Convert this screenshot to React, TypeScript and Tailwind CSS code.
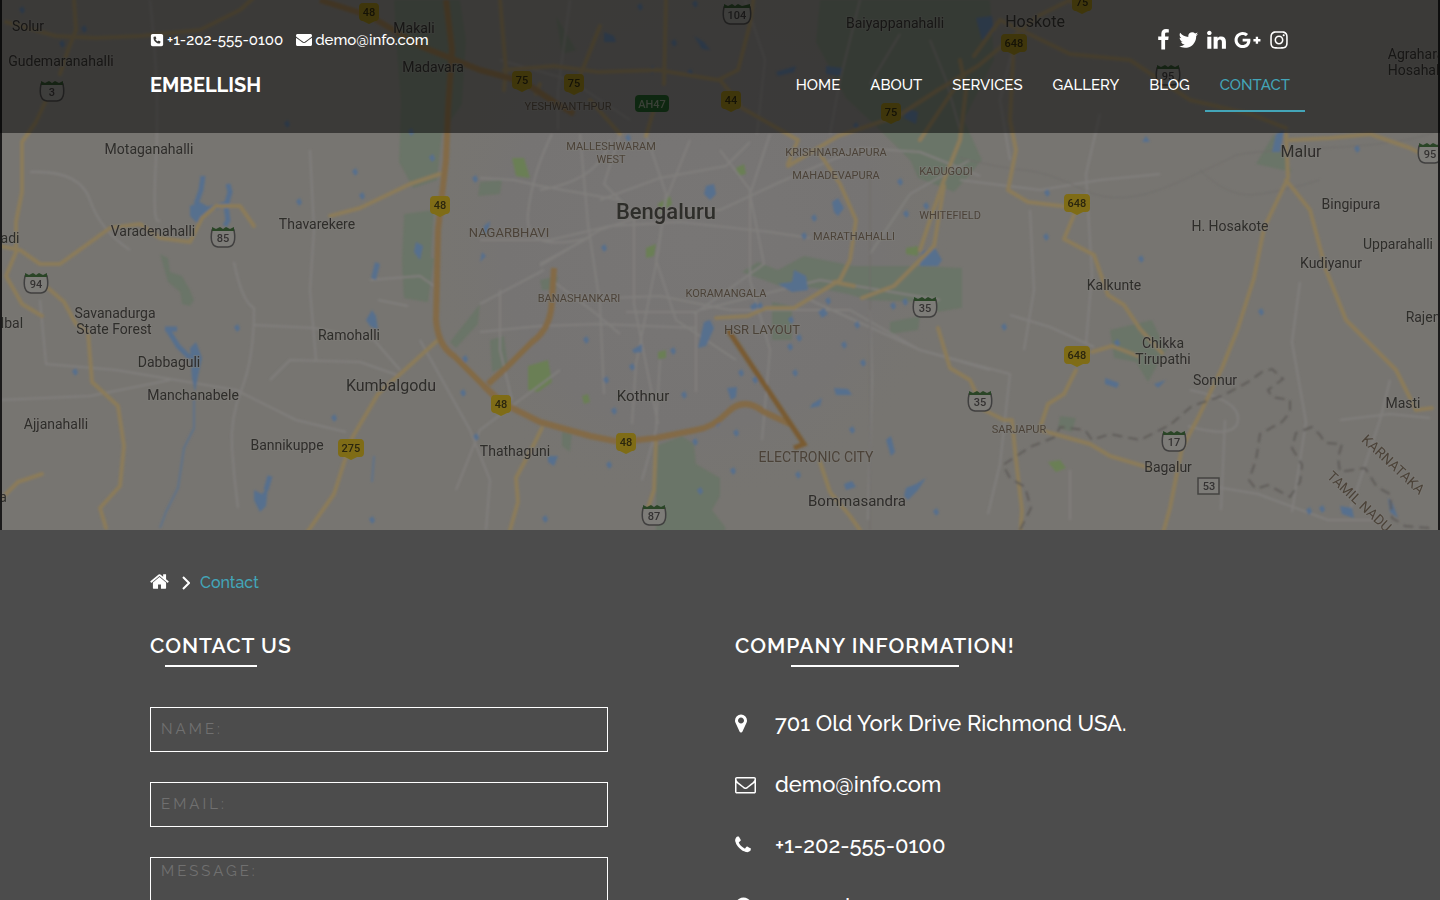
import React from 'react';
import { FaEnvelope, FaGooglePlusG, FaInstagram } from 'react-icons/fa';
import { FaSquarePhone } from 'react-icons/fa6';

const navItems = ['Home', 'About', 'Services', 'Gallery', 'Blog', 'Contact'];

const icons = {
  facebook: {
    box: '479 0 864 1792',
    d: 'M1343 12v264h-157q-86 0-116 36t-30 108v189h293l-39 296h-254v759h-306v-759h-255v-296h255v-218q0-186 104-288.5t277-102.5q147 0 228 12z',
  },
  twitter: {
    box: '64 0 1664 1792',
    d: 'M1684 408q-67 98-162 167 1 14 1 42 0 130-38 259.5t-115.5 248.5-184.5 210.5-258 146-323 54.5q-271 0-496-145 35 4 78 4 225 0 401-138-105-2-188-64.5t-114-159.5q33 5 61 5 43 0 85-11-112-23-185.5-111.5t-73.5-205.5v-4q68 38 146 41-66-44-105-115t-39-154q0-88 44-163 121 149 294.5 238.5t371.5 99.5q-8-38-8-74 0-134 94.5-228.5t228.5-94.5q140 0 236 102 109-21 205-78-37 115-142 178 93-10 186-50z',
  },
  linkedin: {
    box: '128 0 1536 1792',
    d: 'M477 625v991h-330v-991h330zm21-306q1 73-50.5 122t-135.5 49h-2q-82 0-132-49t-50-122q0-74 51.5-122.5t134.5-48.5 133 48.5 51 122.5zm1166 729v568h-329v-530q0-105-40.5-164.5t-126.5-59.5q-63 0-105.5 34.5t-63.5 85.5q-11 30-11 81v553h-329q2-399 2-647t-1-296l-1-48h329v144h-2q20-32 41-56t56.5-52 87-43.5 114.5-15.5q171 0 275 113.5t104 332.5z',
  },
  home: {
    box: '64 0 1664 1792',
    d: 'M1472 992v480q0 26-19 45t-45 19h-384v-384h-256v384h-384q-26 0-45-19t-19-45v-480q0-1 .5-3t.5-3l575-474 575 474q1 2 1 6zm223-69l-62 74q-8 9-21 11h-3q-13 0-21-7l-692-577-692 577q-12 8-24 7-13-2-21-11l-62-74q-8-10-7-23.5t11-21.5l719-599q32-26 76-26t76 26l244 204v-195q0-14 9-23t23-9h192q14 0 23 9t9 23v408l219 182q10 8 11 21.5t-7 23.5z',
  },
  marker: {
    box: '384 0 1024 1792',
    d: 'M1152 640q0-106-75-181t-181-75-181 75-75 181 75 181 181 75 181-75 75-181zm256 0q0 109-33 179l-364 774q-16 33-47.5 52t-67.5 19-67.5-19-46.5-52l-365-774q-33-70-33-179 0-212 150-362t362-150 362 150 150 362z',
  },
  mail: {
    box: '0 0 1792 1792',
    d: 'M1664 1504v-768q-32 36-69 66-268 206-426 338-51 43-83 67t-86.5 48.5-102.5 24.5h-2q-48 0-102.5-24.5t-86.5-48.5-83-67q-158-132-426-338-37-30-69-66v768q0 13 9.5 22.5t22.5 9.5h1472q13 0 22.5-9.5t9.5-22.5zm0-1051v-24.5l-.5-13-3-12.5-5.5-9-9-7.5-14-2.5h-1472q-13 0-22.5 9.5t-9.5 22.5q0 168 147 284 193 152 401 317 6 5 35 29.5t46 37.5 44.5 31.5 50.5 27.5 43 9h2q20 0 43-9t50.5-27.5 44.5-31.5 46-37.5 35-29.5q208-165 401-317 54-43 100.5-115.5t46.5-131.5zm128-37v1088q0 66-47 113t-113 47h-1472q-66 0-113-47t-47-113v-1088q0-66 47-113t113-47h1472q66 0 113 47t47 113z',
  },
  phone: {
    box: '192 0 1408 1792',
    d: 'M1600 1240q0 27-10 70.5t-21 68.5q-21 50-122 106-94 51-186 51-27 0-53-3.5t-57.5-12.5-47-14.5-55.5-20.5-49-18q-98-35-175-83-127-79-264-216t-216-264q-48-77-83-175-3-9-18-49t-20.5-55.5-14.5-47-12.5-57.5-3.5-53q0-92 51-186 56-101 106-122 25-11 68.5-21t70.5-10q14 0 21 3 18 6 53 76 11 19 30 54t35 63.5 31 53.5q3 4 17.5 25t21.5 35.5 7 28.5q0 20-28.5 50t-62 55-62 53-28.5 46q0 9 5 22.5t8.5 20.5 14 24 11.5 19q76 137 174 235t235 174q2 1 19 11.5t24 14 20.5 8.5 22.5 5q18 0 46-28.5t53-62 55-62 50-28.5q14 0 28.5 7t35.5 21.5 25 17.5q25 15 53.5 31t63.5 35 54 30q70 35 76 53 3 7 3 21z',
  },
  globe: {
    box: '128 0 1536 1792',
    d: 'M896 128q209 0 385.500 103t279.500 279.500 103 385.500-103 385.500-279.500 279.500-385.500 103-385.500-103-279.500-279.500-103-385.500 103-385.500 279.500-279.500 385.500-103z',
  },
};

const Icon: React.FC<{ name: keyof typeof icons; className?: string }> = ({ name, className }) => (
  <svg viewBox={icons[name].box} fill="currentColor" className={className} aria-hidden="true">
    <path d={icons[name].d} />
  </svg>
);

type Label = [text: string, x: number, y: number, size?: number];

const towns: Label[] = [
  ['Solur', 28, 31], ['Gudemaranahalli', 61, 66], ['Makali', 414, 33], ['Madavara', 433, 72],
  ['Baiyappanahalli', 895, 28], ['Hoskote', 1035, 27, 16], ['Agrahara', 1416, 59], ['Hosahalli', 1417, 75],
  ['Motaganahalli', 149, 154], ['Varadenahalli', 153, 236], ['Thavarekere', 317, 229], ['adi', 10, 243],
  ['Malur', 1301, 157, 16], ['Bingipura', 1351, 209], ['H. Hosakote', 1230, 231], ['Upparahalli', 1398, 249],
  ['Kudiyanur', 1331, 268], ['Kalkunte', 1114, 290], ['Rajendra', 1433, 322], ['lbal', 12, 328],
  ['Savanadurga', 115, 318], ['State Forest', 114, 334], ['Dabbaguli', 169, 367], ['Manchanabele', 193, 400],
  ['Ramohalli', 349, 340], ['Kumbalgodu', 391, 391, 16], ['Kothnur', 643, 401, 15], ['Ajjanahalli', 56, 429],
  ['Bannikuppe', 287, 450], ['Thathaguni', 515, 456], ['Bommasandra', 857, 506, 15], ['Chikka', 1163, 348],
  ['Tirupathi', 1163, 364], ['Sonnur', 1215, 385], ['Masti', 1403, 408], ['Bagalur', 1168, 472],
  ['a', 3, 502],
];

const districts: Label[] = [
  ['YESHWANTHPUR', 568, 110, 11], ['MALLESHWARAM', 611, 150, 11], ['WEST', 611, 163, 11], ['KRISHNARAJAPURA', 836, 156, 11],
  ['MAHADEVAPURA', 836, 179, 11], ['KADUGODI', 946, 175, 11], ['WHITEFIELD', 950, 219, 11], ['NAGARBHAVI', 509, 237, 13],
  ['MARATHAHALLI', 854, 240, 11], ['BANASHANKARI', 579, 302, 11], ['KORAMANGALA', 726, 297, 11], ['HSR LAYOUT', 762, 334, 13],
  ['ELECTRONIC CITY', 816, 462, 14], ['SARJAPUR', 1019, 433, 11],
];

const highways: Label[] = [
  ['48', 369, 12], ['75', 522, 80], ['75', 574, 83], ['44', 731, 100], ['75', 891, 112], ['75', 1082, 2],
  ['648', 1014, 43], ['48', 440, 205], ['648', 1077, 203], ['648', 1077, 355], ['48', 501, 404], ['48', 626, 442],
  ['275', 351, 448],
];

const shields: Label[] = [
  ['3', 52, 91], ['104', 737, 14], ['95', 1168, 75], ['95', 1430, 153], ['85', 223, 237], ['94', 36, 283],
  ['35', 925, 307], ['35', 980, 401], ['17', 1174, 441], ['87', 654, 515],
];

const parks = [
  'M394 0h66l6 40-4 64-20 30-5 46-24 8-14-26 2-60-4-50z', 'M404 214l30-4-6 92-24-4-2-40z', 'M402 258h32l-6 44-24-4z',
  'M820 0h170l4 60-30 60 18 40-18 20-40-6-46-46-32-30-30-56z', 'M900 136l48-6 26 40-20 22-36-14z',
  'M742 272l16-10 20 8 26-14 50 10 70 0 38 2 0 40-24 4-20-10-50-2-20-6-20-4-28-4-20 0z', 'M772 302l20 4 0 34-20 0z',
  'M1110 330l42-10 14 30-18 32-12-20-22-4z', 'M656 446l26-10 12 8 2 20 24 14v18l-8 14 14 18-2 4h-68z',
  'M1256 164l18-30 18 38z', 'M450 342l30-38-2 20-22 24z', 'M490 340l14-4 4 30-16 6z',
  'M540 280l18-4-2 14-14 0z', 'M480 182l22-2-2 14-22 2z', 'M890 322l30-6-2 14-28 4z', 'M1060 416l16 2-4 14-14-4z',
  'M160 254l8 4 2 14 12 4 8 14 4 10-4 6-8-2-2-12-12-10z', 'M562 432l10 2-2 18-8-6z', 'M556 16l20 34-14 4z',
];

const gardens = [
  'M528 366l20-6 4 22-14 10-10-2z', 'M658 204l12-8 2 8-12 10z', 'M646 248l10-4-2 12-8 2z', 'M906 248l12-2v10l-12-2z',
  'M1048 462l12-2 6 8-10 4z', 'M582 396l6-2 2 8-6 2z', 'M658 352l8-2v8l-8 1z', 'M512 158l12 0 6 20-14-2z', 'M736 168l8-4 2 10-8 2z',
];

const lakes = [
  'M190 206l10-4 10 6-4 8-8 8-8-8z',
  'M190 348l6-6 6 16-4 18-3 16-3-14z', 'M254 490l8 4 6-8-2 20-6 6-6-12z',
  'M366 320l6-10 4 6 2 14-8-4z', 'M375 262l5 2-4 16-5-2z', 'M416 242l7 4-3 14-6-8z', 'M704 322l6-2 4 8-8 18-8 2z',
  'M706 186l8-2 2 10-6 6-6-6z', 'M832 202l6-4 6 10-6 8-4-4z', 'M778 284l14-2 2-12 12 6 2 14-16 2z', 'M922 252l12-6 8 14-4 6-18 0z',
  'M727 388l10-1-1 10-5 3z', 'M834 388l14 1 4 6-16 0z', 'M812 404l10-6-2 8-10 2z', 'M886 440l5-4 4 16-4 4z',
  'M906 488l10-4 10-6-8 12-10 10-4-4z', 'M548 456l10 0-4 10-6-4z', 'M632 350l10-6 0 8-8 1z', 'M818 312l6-4 4 6-6 4z',
  'M1105 378l14 5-2 5-12-4z', 'M1154 384l12-4-8 8z', 'M1340 506l12 2 2 10-12-4z', 'M844 484l8-3 4 6-10 3z',
  'M976 18l16-2 2 18-12 6z', 'M694 36l10 6 6 8-8-1z', 'M604 32l10 4 2 6-12 0z', 'M826 66l16 2-2 8-14-2z',
  'M776 72l20-6-2 6-16 4z', 'M906 108l12 4-2 12-12-6z', 'M1276 134l8-4-4 22-8 0z', 'M1388 498l4 4 6 16-8-6z', 'M482 252l4 4-6 6z',
  'M484 226l6-5-2 12-6 2z', 'M1142 142l4-6 4 6z', 'M750 306l6-4 2 6-6 2z',
];

const lakeArms = [
  'M203 176l-2 14-5 14M198 212l28-8M228 184l2 8-4 14 2 14-3 6', 'M165 329h12M168 330l10 16 12 12', 'M270 476l-4 14',
];

const ponds: [number, number][] = [
  [22, 10], [84, 29], [62, 44], [287, 124], [411, 132], [432, 158], [355, 172], [475, 179], [299, 202], [362, 196],
  [75, 372], [237, 328], [334, 418], [463, 393], [465, 359], [476, 437], [606, 380], [673, 351], [684, 395], [614, 411],
  [741, 373], [755, 380], [795, 373], [790, 347], [844, 345], [863, 363], [852, 430], [733, 471], [609, 465], [545, 519],
  [695, 442], [717, 423], [736, 433], [700, 491], [798, 475], [936, 512], [791, 320], [799, 338], [640, 7], [695, 4],
  [674, 43], [652, 70], [690, 73], [604, 248], [628, 138], [900, 182], [906, 214], [804, 236], [856, 126], [926, 206],
  [1046, 237], [1047, 193], [1357, 149], [1004, 327], [1261, 312], [1141, 259], [1309, 511], [1322, 509], [372, 520],
  [586, 340], [632, 367], [857, 325], [893, 306], [905, 302], [1117, 343], [814, 218], [760, 306], [828, 301],
];

const minorRoads = [
  'M30 172Q80 170 90 200T130 250', 'M150 0Q160 90 156 160T160 220', 'M234 262q8 40 20 46 0 50-12 80t-10 60 6 60',
  'M254 325l60 3 60 12 26 30', 'M370 280l50-4 14 10', 'M378 300l30 6M310 150l4 80-4 60 6 70', 'M480 178l34 2 26 6 80 14',
  'M552 134q-20 40-24 80t60 24l-48 26', 'M540 266l60-36 60-20 60 0 60-28 80-34 60 4 60 24', 'M544 270l-64 34M554 282l40 30 26 22',
  'M580 134l8 90 12 80 4 90', 'M620 134l-16 50 30 30 0 90 24 120', 'M646 134l20 60-8 60-22 110-4 60', 'M690 140l-24 60-10 60 20 60 60 40',
  'M480 240l70 0 60-14 70-4 90 10 40 6', 'M540 190q60-10 70-50M560 300l100-4 70 14 120 0 70 40 70 20', 'M600 200l60-22 66-12 24-24',
  'M626 312l70 0 0 80', 'M480 332l60-6 60-2 96 4', 'M500 290v60l12 50', 'M720 150l30 40 0 90 20 70-8 90', 'M700 310l120-30 120 20',
  'M660 360l-4 70-14 50', 'M810 300l110 50 90 24-10 90-12 50', 'M870 310l2 70-4 140', 'M960 180l80 10 60-10 60-6',
  'M1020 20l-20 80 10 60', 'M1024 350l10-60-4-80', 'M1010 315l40 12 44 20', 'M1086 344l6-70-6-100 14-60',
  'M1190 390q50 10 48 30t-50 6M1225 420l-4 90', 'M1300 282l-8 60 14 80-14 90', 'M1390 380l-10 40-30 90M1340 420l50-6 40 4',
  'M0 400l90-4 80-16M40 300l6 64 70 6 120 20 60 30 50 12', 'M270 380l20-20 70 2 40 14', 'M420 340l50 90 20 50-4 50',
  'M560 370l-80 60-24 60', 'M1198 484l60 10 70 26 50 0', 'M1070 470l0 50M970 160l-60 34-40 60', 'M770 134l-20 60 14 70-70 50',
  'M745 0l20 60-8 74M860 0l-20 80-10 54', 'M930 40l16 40 14 50M900 34l-30 50', 'M570 0l-12 90 0 40M500 60l70 20 60 40',
];

const railways = [
  'M870 170v360', 'M960 158q40 10 64 12t60 20 90-6 60-28 90-8 110-16', 'M1200 170q20 20 40 24t80-14',
];

const mainRoads = [
  'M74 0l2 30M6 22l50 14 40 2 44-2 60-6 40-20 20-18M76 30l-8 20', 'M68 50l-8 24M48 96l-12 26-14 20 0 50-6 30 0 30-10 24 16 28 20 12',
  'M48 288l16 14 12 22 12 8 4 50 26 24 6 40-4 40-20 22 6 20',
  'M0 246l20 4 20 14 20 0 50-36 30-4 20 14 30 4 12-24 14-12 24 0 14 20', 'M330 216l30-8 50-24 30-10',
  'M438 340l-60 54-26 44-18 56-28 40', 'M2 498l16-16 24-8', 'M500 0l6 70-2 20M504 70l50-4 44 6 60-2 60 10 20-10 12-46 4-30',
  'M728 100l70 40-10 24M720 80l20 24M540 84l-4 10M656 102l-10 34M590 100l30 34', 'M666 0l-2 84',
  'M788 166l50-30 30-10 30-10 40-26 40-24 60-50 60-30', 'M820 154l20 30 16 36-6 40-10 20-46 28-28 0-18 8-32 2',
  'M960 60l6 30-6 50-16 40-14 40-10 30M1014 40l-4 80 6 30-8 40 20 12 50 6', 'M1068 0l10 6M1000 20l70 34 60 6 60 40 60 14 36 14',
  'M1074 215l-10 24 30 16 14 40 16 10 16 24 22 24M1092 352l20-6 26 10', 'M1076 370l-12 24-16 10-8 24',
  'M1000 20l-26 36M1286 134l2 44-24 50-10 50-16 50-16 40-24 50-16 30-12 60-14 50', 'M1286 180l24 30 16 60 20 50 50 50 20 40',
  'M1290 140l40-2 40-4 40 14 20 10', 'M960 80l-40 60M938 328l12 40 20 12 14 30 20 10h8l4 40 6 50-2 30',
  'M1040 430l50 14 20 12 40 12', 'M542 428l-10 20-16 30 2 24-8 28M656 440l-2 50-8 24M820 462l10 30 20 24 10 14',
  'M854 286l-20-4M1416 410l16-2M600 26l-20 50', 'M862 298l32-12 40-40 10-60',
];

const trunkRoads = [
  'M320 0l50 16 50 30 60 24 44 12 30 20 20 12', 'M446 0l6 50-4 60-2 50-8 70-2 90q2 26 18 36l30 30 20 20',
  'M554 268l-2 30q0 30-20 44l-24 24-20 18', 'M484 386l20 18 36 18 50 14 30 6 36-4 20-4 20-4q16-2 32-18t36 0l26 12',
];

const expressway = 'M728 330l76 114-10 4';

const stateBorder =
  'M1020 530L1031 508 1025 487 1010 478 1003 465 1018 455 1030 447 1055 437 1060 427 1085 430 1092 440 1110 434 1140 440 1170 425 1192 406 1222 396 1248 382 1262 372 1272 369 1283 379 1268 390 1272 397 1290 400 1290 412 1282 422 1260 434 1256 460 1249 480 1256 489 1268 485 1290 497 1300 482 1302 465 1292 448 1296 433 1312 427 1320 435 1325 443 1342 444 1338 458 1340 472 1365 468 1377 487 1390 494 1392 518 1405 526 1430 528';

const CityMap: React.FC = () => (
  <svg
    viewBox="0 0 1440 530"
    preserveAspectRatio="xMidYMin slice"
    className="col-start-1 row-start-1 h-[530px] w-full bg-[#777571]"
    fontFamily="Roboto, 'Noto Sans', sans-serif"
    textAnchor="middle"
    role="img"
    aria-label="Map of Bengaluru"
  >
    <defs>
      <radialGradient id="urban" gradientUnits="userSpaceOnUse" cx="690" cy="240" r="270">
        <stop offset="0" stopColor="#787675" />
        <stop offset="0.7" stopColor="#767473" />
        <stop offset="1" stopColor="#777571" stopOpacity="0" />
      </radialGradient>
      <filter id="soften">
        <feGaussianBlur stdDeviation="0.8" />
      </filter>
      <filter id="soften-text">
        <feGaussianBlur stdDeviation="0.5" />
      </filter>
    </defs>
    <rect width="1440" height="530" fill="#777571" />
    <rect width="1440" height="530" fill="url(#urban)" />
    <g filter="url(#soften)">
      <g fill="#6b7567">
        {parks.map((d) => <path key={d} d={d} />)}
      </g>
      <g fill="#6a7f54">
        {gardens.map((d) => <path key={d} d={d} />)}
      </g>
      <g fill="none" stroke="#817f7d" strokeWidth="2" strokeLinejoin="round">
        {minorRoads.map((d) => <path key={d} d={d} />)}
      </g>
      <g fill="none" stroke="#6f6d6a" strokeWidth="1">
        {railways.map((d) => <path key={d} d={d} />)}
      </g>
      <g fill="#566f8e">
        {lakes.map((d) => <path key={d} d={d} />)}
        {ponds.map(([x, y]) => <path key={`${x}-${y}`} d={`M${x - 3} ${y - 1}l4-3 2 5-3 3z`} />)}
      </g>
      <g fill="none" stroke="#566f8e" strokeWidth="5">
        {lakeArms.map((d) => <path key={d} d={d} />)}
      </g>
      <path d="M194 398l0 30-10 20-6 40-12 24-6 16M374 456l-2 26" fill="none" stroke="#5f7289" strokeWidth="2" />
      <g fill="none" stroke="#8b7b5a" strokeWidth="4" strokeLinejoin="round" strokeLinecap="round">
        {mainRoads.map((d) => <path key={d} d={d} />)}
      </g>
      <g fill="none" stroke="#836a46" strokeWidth="6" strokeLinejoin="round">
        {trunkRoads.map((d) => <path key={d} d={d} />)}
      </g>
      <path d={expressway} fill="none" stroke="#795b33" strokeWidth="5" />
      <path d={stateBorder} fill="none" stroke="#5f5c59" strokeWidth="2" strokeDasharray="10 6" />
    </g>

    <g filter="url(#soften-text)">
      {highways.map(([text, x, y]) => (
        <g key={`${x}-${y}`}>
          <rect x={x - (text.length > 2 ? 13 : 10)} y={y - 9} width={text.length > 2 ? 26 : 20} height="18" rx="4" fill="#7f6c16" />
          <path d={`M${x - 8} ${y + 8}h16l-8 4z`} fill="#7f6c16" />
          <text x={x} y={y + 4} fontSize="11" fontWeight="500" fill="#2a2510">{text}</text>
        </g>
      ))}
      <rect x="635" y="95" width="34" height="17" rx="4" fill="#1f5020" />
      <text x="652" y="108" fontSize="11" fontWeight="500" fill="#75806f">AH47</text>
      {shields.map(([text, x, y]) => {
        const w = text.length > 2 ? 13 : 11;
        return (
          <g key={`${x}-${y}`}>
            <path
              d={`M${x - w} ${y - 7}q-3 16 6 17h${w * 2 - 12}q9-1 6-17z`}
              fill="#7d7b78"
              stroke="#41403f"
              strokeWidth="1.500"
            />
            <path d={`M${x - w} ${y - 10}l4 2 4-2 3 2 3-2 4 2 ${w * 2 - 18}-2v4h-${w * 2}z`} fill="#2a4526" />
            <text x={x} y={y + 5} fontSize="11" fontWeight="500" fill="#343332">{text}</text>
          </g>
        );
      })}
      <rect x="1198" y="478" width="21" height="16" fill="#7d7b78" stroke="#444342" strokeWidth="1.500" />
      <text x="1209" y="490" fontSize="11" fontWeight="500" fill="#343332">53</text>

      <g fill="#2f2d2b" stroke="#7d7b77" strokeWidth="2" strokeOpacity="0.500" paintOrder="stroke">
        {towns.map(([text, x, y, size = 14]) => (
          <text key={`${x}-${y}`} x={x} y={y} fontSize={size}>{text}</text>
        ))}
        <text x="666" y="219" fontSize="22" fontWeight="500">Bengaluru</text>
      </g>
      <g fill="#4c4339" stroke="#7d7b77" strokeWidth="2" strokeOpacity="0.500" paintOrder="stroke">
        {districts.map(([text, x, y, size]) => (
          <text key={`${x}-${y}`} x={x} y={y} fontSize={size}>{text}</text>
        ))}
        <text fontSize="14" transform="translate(1390 468) rotate(43)">KARNATAKA</text>
        <text fontSize="14" transform="translate(1356 505) rotate(43)">TAMIL NADU</text>
      </g>
    </g>
    <path d="M1 0v530M1439 0v530" stroke="#1b1a1a" strokeWidth="2" />
  </svg>
);

const Header: React.FC = () => (
  <header className="z-10 col-start-1 row-start-1 self-start bg-black/50 pb-[21px] pt-7">
    <div className="mx-auto max-w-[1170px]">
      <div className="flex h-6 items-center justify-between px-[15px] text-[15px] font-medium">
        <div className="flex items-center gap-[13px]">
          <a href="tel:+12025550100" className="flex items-center gap-[3px]">
            <FaSquarePhone className="size-[14px]" />
            +1-202-555-0100
          </a>
          <a href="mailto:demo@info.com" className="flex items-center gap-[3px]">
            <FaEnvelope className="size-4" />
            demo@info.com
          </a>
        </div>
        <div className="flex items-center gap-2 pr-px">
          <a href="#facebook" aria-label="Facebook"><Icon name="facebook" className="h-[22px] w-[13px]" /></a>
          <a href="#twitter" aria-label="Twitter"><Icon name="twitter" className="h-[22px] w-[21px]" /></a>
          <a href="#linkedin" aria-label="LinkedIn"><Icon name="linkedin" className="h-[22px] w-[19px]" /></a>
          <a href="#google" aria-label="Google Plus"><FaGooglePlusG className="h-[26px] w-[27px]" /></a>
          <a href="#instagram" aria-label="Instagram"><FaInstagram className="size-5" /></a>
        </div>
      </div>
      <div className="flex items-start justify-between pl-[15px] pt-[6px]">
        <a href="#home" className="pt-[15px] text-xl leading-6 font-bold">EMBELLISH</a>
        <nav className="flex">
          {navItems.map((item) => (
            <a
              key={item}
              href={`#${item.toLowerCase()}`}
              className={`border-b-2 px-[15px] pb-[13px] pt-[15px] text-[15px] leading-6 font-medium uppercase ${
                item === 'Contact' ? 'border-[#43a5b8] text-[#43a5b8]' : 'border-transparent'
              }`}
            >
              {item}
            </a>
          ))}
        </nav>
      </div>
    </div>
  </header>
);

const fieldClass =
  'block w-full border border-white bg-transparent px-[10px] text-[15px] tracking-[3px] text-white placeholder-[#707070] outline-none';

const ContactForm: React.FC = () => (
  <form className="space-y-[30px]">
    <input type="text" aria-label="Name" placeholder="NAME:" className={`${fieldClass} h-[45px] pb-[2px]`} />
    <input type="email" aria-label="Email" placeholder="EMAIL:" className={`${fieldClass} h-[45px] pb-[2px]`} />
    <textarea aria-label="Message" placeholder="MESSAGE:" className={`${fieldClass} h-[150px] resize-none pt-[2px]`} />
    <button type="submit" className="border border-white px-8 py-3 text-[15px] font-medium">SEND</button>
  </form>
);

const InfoRow: React.FC<{ icon: React.ReactNode; children: React.ReactNode }> = ({ icon, children }) => (
  <li className="flex items-center">
    <span className="w-10 shrink-0">{icon}</span>
    {children}
  </li>
);

export default function App() {
  return (
    <div className="min-h-screen bg-[#4c4c4c] font-[Raleway,Lato,sans-serif] text-white">
      <section className="grid">
        <CityMap />
        <Header />
      </section>

      <main className="mx-auto max-w-[1170px] pb-16 pt-[41px]">
        <nav aria-label="Breadcrumb" className="flex h-6 items-center px-[15px] text-base">
          <a href="#home" aria-label="Home"><Icon name="home" className="mb-1 h-[21px] w-[19px]" /></a>
          <svg viewBox="0 0 8 14" className="ml-[13px] mr-[10px] h-[14px] w-2" fill="none" stroke="currentColor" strokeWidth="2" aria-hidden="true">
            <path d="M1 1l6 6-6 6" />
          </svg>
          <span className="font-medium text-[#43a5b8]">Contact</span>
        </nav>

        <div className="grid grid-cols-12 pt-9">
          <section className="col-span-5 px-[15px]">
            <h2 className="mb-10 inline-block text-[21px] leading-[30px] font-semibold tracking-[1px]">
              CONTACT US
              <span className="mx-[15px] mt-1 block h-[2px] w-[65%] bg-white" />
            </h2>
            <ContactForm />
          </section>

          <section className="col-span-5 col-start-7 px-[15px]">
            <h2 className="mb-10 inline-block text-[21px] leading-[30px] font-semibold tracking-[1px]">
              COMPANY INFORMATION!
              <span className="mx-auto mt-1 block h-[2px] w-3/5 bg-white" />
            </h2>
            <ul className="space-y-[29px] text-[22px] leading-8 font-medium">
              <InfoRow icon={<Icon name="marker" className="h-[21px] w-3" />}>701 Old York Drive Richmond USA.</InfoRow>
              <InfoRow icon={<Icon name="mail" className="size-[21px]" />}>demo@info.com</InfoRow>
              <InfoRow icon={<Icon name="phone" className="h-5 w-4" />}>+1-202-555-0100</InfoRow>
              <InfoRow icon={<Icon name="globe" className="h-5 w-[17px]" />}>example.com</InfoRow>
            </ul>
          </section>
        </div>
      </main>
    </div>
  );
}
